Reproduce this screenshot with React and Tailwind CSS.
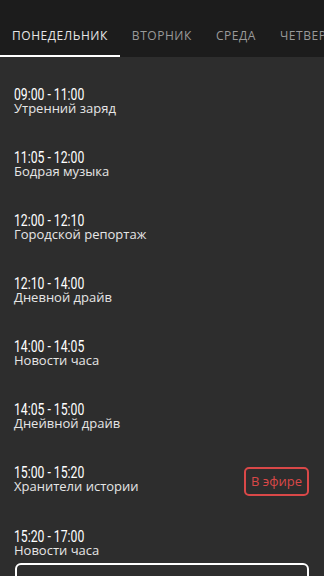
import { useState } from 'react';

const days = ['Понедельник', 'Вторник', 'Среда', 'Четверг', 'Пятница'];

const schedule = [
    { time: '09:00 - 11:00', title: 'Утренний заряд' },
    { time: '11:05 - 12:00', title: 'Бодрая музыка' },
    { time: '12:00 - 12:10', title: 'Городской репортаж' },
    { time: '12:10 - 14:00', title: 'Дневной драйв' },
    { time: '14:00 - 14:05', title: 'Новости часа' },
    { time: '14:05 - 15:00', title: 'Днейвной драйв' },
    { time: '15:00 - 15:20', title: 'Хранители истории', live: true },
    { time: '15:20 - 17:00', title: 'Новости часа' },
];

const App = () => {
    const [active, setActive] = useState(0);

    return (
        <div className="w-[324px] h-[576px] overflow-hidden bg-[#2d2d2d] font-['Open_Sans',sans-serif]">
            <div className="h-[57px] bg-[#1c1c1c] flex items-end overflow-hidden whitespace-nowrap">
                {days.map((day, idx) => (
                    <button
                        key={day}
                        onClick={() => setActive(idx)}
                        className={`shrink-0 h-[57px] px-3 pt-[17px] border-b-2 text-[12px] uppercase tracking-[0.55px] ${idx === active ? 'border-white text-[#e6e6e6]' : 'border-transparent text-[#9a9a9a]'}`}
                    >
                        {day}
                    </button>
                ))}
            </div>

            <div className="pt-[29px] px-[14px] flex flex-col gap-[32px]">
                {schedule.map((item, idx) => (
                    <div key={idx} className="flex items-start justify-between">
                        <div>
                            <div className="h-[17px] leading-[17px] text-[16.5px] text-white font-['Roboto',sans-serif] origin-left scale-x-[0.74] whitespace-nowrap">{item.time}</div>
                            <div className="mt-[-4px] text-[13px] leading-[18px] text-[#e6e6e6]">{item.title}</div>
                        </div>
                        {item.live && (
                            <div className="mt-[3px] mr-[1px] px-[5px] h-[29px] flex items-center rounded-[5px] border-2 border-[#d94848] text-[13px] text-[#d94848]">
                                В эфире
                            </div>
                        )}
                    </div>
                ))}
            </div>
            <div className="mt-[4px] mx-[15px] h-[40px] rounded-[6px] border-2 border-white" />
        </div>
    );
};

export default App;
